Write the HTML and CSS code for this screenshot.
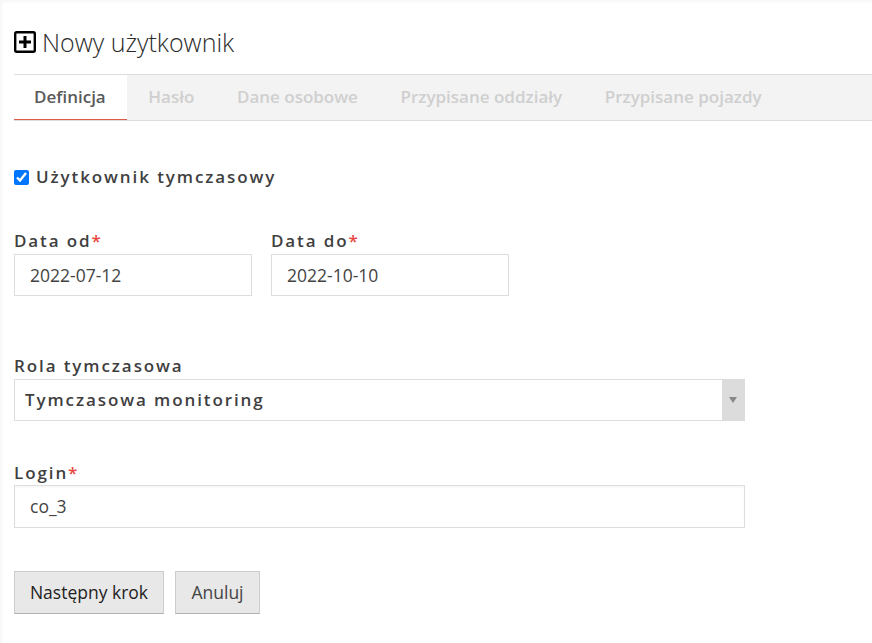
FILE: index.html
```html
<!DOCTYPE html>
<html lang="pl">
    <head>
        <meta name="viewport" content="width=device-width, initial-scale=1.0">
        <title>Nowy użytkownik</title>
        <link rel="stylesheet" href="styles.css">
    </head>
    <body>
        <div class="page">
            <h1 class="page__title">
                <svg class="page__icon" width="22" height="22" viewBox="0 0 22 22">
                    <rect x="1.2" y="1.2" width="19.6" height="19.6" rx="1.5" fill="none" stroke="#000" stroke-width="2.4"/>
                    <path d="M11 5v12M5 11h12" fill="none" stroke="#000" stroke-width="3"/>
                </svg>
                Nowy użytkownik
            </h1>
            <div class="tabs">
                <a class="tabs__item tabs__item--active">Definicja</a>
                <a class="tabs__item">Hasło</a>
                <a class="tabs__item">Dane osobowe</a>
                <a class="tabs__item">Przypisane oddziały</a>
                <a class="tabs__item">Przypisane pojazdy</a>
            </div>
            <form class="form">
                <label class="form__check">
                    <input type="checkbox" checked>
                    <span class="form__check-text">Użytkownik tymczasowy</span>
                </label>
                <div class="form__dates">
                    <div class="field">
                        <label class="field__label">Data od<span class="field__req">*</span></label>
                        <input class="field__input field__input--date" type="text" value="2022-07-12">
                    </div>
                    <div class="field">
                        <label class="field__label">Data do<span class="field__req">*</span></label>
                        <input class="field__input field__input--date" type="text" value="2022-10-10">
                    </div>
                </div>
                <div class="field field--role">
                    <label class="field__label">Rola tymczasowa</label>
                    <div class="select">
                        <span class="select__value">Tymczasowa monitoring</span>
                        <span class="select__arrow"></span>
                    </div>
                </div>
                <div class="field field--login">
                    <label class="field__label">Login<span class="field__req">*</span></label>
                    <input class="field__input field__input--login" type="text" value="co_3">
                </div>
                <div class="form__buttons">
                    <button type="button" class="btn btn--next">Następny krok</button>
                    <button type="button" class="btn btn--cancel">Anuluj</button>
                </div>
            </form>
        </div>
    </body>
</html>
```
FILE: styles.css
```css
* {
    box-sizing: border-box;
}
body {
    margin: 0;
    background-color: #fff;
    color: #3f3f3f;
    font-family: "Open Sans", sans-serif;
    font-size: 16px;
}
.page {
    height: 643px;
    padding: 26px 0 0 14px;
    overflow: hidden;
    box-shadow: inset 3px 3px 3px -1px rgba(0, 0, 0, 0.04);
}
.page__title {
    display: flex;
    align-items: center;
    gap: 6px;
    height: 32px;
    margin: 0 0 16px;
    font-size: 25px;
    font-weight: 300;
    color: #2c2c2c;
}
.page__icon {
    flex: none;
}
.tabs {
    display: flex;
    height: 47px;
    background-color: #f3f3f3;
    border-top: 1px solid #ddd;
    border-bottom: 1px solid #ddd;
}
.tabs__item {
    padding: 10px 21.3px 0;
    color: #cfcfcf;
    font-size: 17px;
    font-weight: 600;
}
.tabs__item--active {
    width: 113px;
    padding-left: 20px;
    padding-right: 0;
    background-color: #fff;
    border-bottom: 1px solid #e05a4a;
    color: #5a5a5a;
}
.form {
    padding-top: 44px;
}
.form__check {
    display: flex;
    align-items: center;
    gap: 7px;
    height: 24px;
    font-size: 17px;
    font-weight: 600;
    letter-spacing: 1.9px;
}
.form__check input {
    width: 15px;
    height: 15px;
    margin: 0;
}
.form__check-text {
    padding-bottom: 2px;
}
.form__dates {
    display: flex;
    gap: 19px;
    margin-top: 41px;
}
.field {
    display: flex;
    flex-direction: column;
    width: 731px;
}
.form__dates .field {
    width: 238px;
}
.field--role {
    margin-top: 59px;
}
.field--login {
    margin-top: 40px;
}
.field__label {
    height: 24px;
    font-size: 17px;
    font-weight: 600;
    letter-spacing: 1.9px;
    line-height: 22px;
}
.field--login .field__label {
    line-height: 24px;
}
.field__req {
    color: #e8473f;
}
.field__input {
    width: 100%;
    height: 42px;
    padding: 0 15px;
    border: 1px solid #ddd;
    background-color: #fff;
    color: #444;
    font-family: inherit;
    font-size: 17.5px;
}
.field__input--login {
    height: 43px;
    padding-bottom: 2px;
    box-shadow: inset 0 2px 2px rgba(0, 0, 0, 0.03);
}
.select {
    display: flex;
    align-items: center;
    justify-content: space-between;
    height: 42px;
    border: 1px solid #ddd;
    border-right: none;
    font-size: 17px;
    font-weight: 600;
    letter-spacing: 1.9px;
}
.select__value {
    padding: 0 0 2px 10px;
}
.select__arrow {
    display: flex;
    align-items: center;
    justify-content: center;
    width: 23px;
    height: 42px;
    padding-right: 2px;
    background-color: #dcdcdc;
}
.select__arrow::after {
    content: "";
    border-top: 6px solid #888;
    border-left: 4px solid transparent;
    border-right: 4px solid transparent;
}
.form__buttons {
    display: flex;
    gap: 11px;
    margin-top: 43px;
}
.btn {
    height: 43px;
    padding: 0 0 2px;
    border: 1px solid #ccc;
    border-bottom-color: #b0b0b0;
    background-color: #e8e8e8;
    color: #222;
    font-family: inherit;
    font-size: 17.5px;
    cursor: pointer;
}
.btn--next {
    width: 150px;
}
.btn--cancel {
    width: 85px;
    color: #444;
}
```
